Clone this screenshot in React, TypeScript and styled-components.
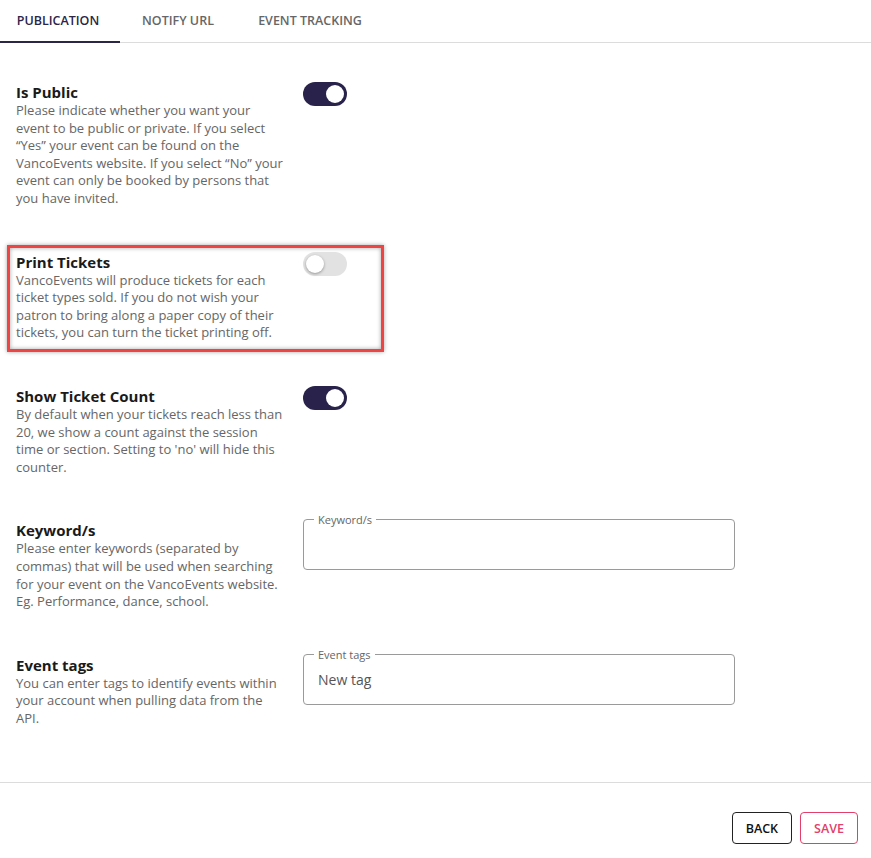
import styled, { createGlobalStyle } from "styled-components";
import { useState } from "react";

const GlobalStyle = createGlobalStyle`
  body {
    margin: 0;
    background: #ffffff;
    font-family: "Open Sans", "Noto Sans", sans-serif;
  }
`;

const Page = styled.div`
  width: 871px;
  background: #fff;
`;

const TabBar = styled.div`
  display: flex;
  height: 42px;
  border-bottom: 1px solid #dcdcdc;
`;

const Tab = styled.div<{ $active?: boolean; $width: number }>`
  position: relative;
  width: ${(p) => p.$width}px;
  display: flex;
  align-items: center;
  justify-content: center;
  padding-bottom: 2px;
  box-sizing: border-box;
  font-size: 12.5px;
  font-weight: 600;
  color: ${(p) => (p.$active ? "#2b2548" : "#666666")};
  cursor: pointer;
  &::after {
    content: "";
    display: ${(p) => (p.$active ? "block" : "none")};
    position: absolute;
    left: 0;
    width: 120px;
    bottom: -1px;
    height: 2px;
    background: #2b2548;
  }
`;

const Content = styled.div`
  display: flex;
  flex-direction: column;
  gap: 44px;
  padding: 39px 16px 55px;
`;

const Row = styled.div<{ $highlight?: boolean }>`
  position: relative;
  display: grid;
  grid-template-columns: 287px 432px;
  align-items: start;
  &::before {
    content: "";
    display: ${(p) => (p.$highlight ? "block" : "none")};
    position: absolute;
    left: -9px;
    top: -7px;
    width: 371px;
    bottom: -10px;
    border: 3px solid #ee4444;
    box-shadow: 0 0 4px rgba(0, 0, 0, 0.35), inset 0 0 4px rgba(0, 0, 0, 0.35);
    pointer-events: none;
  }
`;

const Info = styled.div`
  width: 268px;
`;

const Title = styled.div`
  font-size: 15px;
  line-height: 20px;
  font-weight: 700;
  color: #1a1a1a;
`;

const Desc = styled.div`
  font-size: 13px;
  line-height: 17.6px;
  color: #666666;
`;

const Track = styled.button<{ $on: boolean }>`
  position: relative;
  width: 44px;
  height: 24px;
  border: none;
  padding: 0;
  border-radius: 12px;
  background: ${(p) => (p.$on ? "#29224a" : "#e2e2e2")};
  cursor: pointer;
`;

const Knob = styled.span<{ $on: boolean }>`
  position: absolute;
  top: 3px;
  left: ${(p) => (p.$on ? "23px" : "3px")};
  width: 18px;
  height: 18px;
  border-radius: 50%;
  background: #ffffff;
  box-shadow: ${(p) => (p.$on ? "none" : "0 1px 3px rgba(0,0,0,0.35)")};
`;

const Field = styled.fieldset`
  margin: -6px 0 0;
  padding: 0 14px;
  height: 56px;
  box-sizing: border-box;
  border: 1px solid #9a9a9a;
  border-radius: 4px;
  display: flex;
  align-items: center;
`;

const Legend = styled.legend`
  padding: 0 4px;
  margin-left: -4px;
  font-size: 11px;
  line-height: 11px;
  color: #666666;
`;

const FieldInput = styled.input`
  border: none;
  outline: none;
  width: 100%;
  padding: 0;
  margin-top: -4px;
  font-family: "Open Sans", "Noto Sans", sans-serif;
  font-size: 14px;
  color: #555555;
  background: transparent;
  &::placeholder {
    color: #555555;
  }
`;

const Footer = styled.div`
  display: flex;
  justify-content: flex-end;
  gap: 8px;
  border-top: 1px solid #dcdcdc;
  padding: 29px 13px 15px;
`;

const ActionButton = styled.button<{ $tone: "dark" | "pink" }>`
  height: 32px;
  padding: 0 13px;
  background: #fff;
  border-radius: 4px;
  border: 1px solid ${(p) => (p.$tone === "dark" ? "#222222" : "#e2406b")};
  color: ${(p) => (p.$tone === "dark" ? "#111111" : "#e2406b")};
  font-family: "Open Sans", "Noto Sans", sans-serif;
  font-size: 12.5px;
  font-weight: 600;
  cursor: pointer;
`;

type Setting = {
  title: string;
  desc: string;
  kind: "toggle" | "field";
  on?: boolean;
  label?: string;
  placeholder?: string;
  highlight?: boolean;
};

const settings: Setting[] = [
  {
    title: "Is Public",
    desc: "Please indicate whether you want your event to be public or private. If you select “Yes” your event can be found on the VancoEvents website. If you select “No” your event can only be booked by persons that you have invited.",
    kind: "toggle",
    on: true,
  },
  {
    title: "Print Tickets",
    desc: "VancoEvents will produce tickets for each ticket types sold. If you do not wish your patron to bring along a paper copy of their tickets, you can turn the ticket printing off.",
    kind: "toggle",
    on: false,
    highlight: true,
  },
  {
    title: "Show Ticket Count",
    desc: "By default when your tickets reach less than 20, we show a count against the session time or section. Setting to 'no' will hide this counter.",
    kind: "toggle",
    on: true,
  },
  {
    title: "Keyword/s",
    desc: "Please enter keywords (separated by commas) that will be used when searching for your event on the VancoEvents website. Eg. Performance, dance, school.",
    kind: "field",
    label: "Keyword/s",
  },
  {
    title: "Event tags",
    desc: "You can enter tags to identify events within your account when pulling data from the API.",
    kind: "field",
    label: "Event tags",
    placeholder: "New tag",
  },
];

const App = () => {
  const [toggles, setToggles] = useState<boolean[]>(settings.map((s) => !!s.on));

  const flip = (i: number) => {
    const next = [...toggles];
    next[i] = !next[i];
    setToggles(next);
  };

  return (
    <>
      <GlobalStyle />
      <Page>
        <TabBar>
          <Tab $active $width={116}>PUBLICATION</Tab>
          <Tab $width={124}>NOTIFY URL</Tab>
          <Tab $width={140}>EVENT TRACKING</Tab>
        </TabBar>
        <Content>
          {settings.map((s, i) => (
            <Row key={s.title} $highlight={s.highlight}>
              <Info>
                <Title>{s.title}</Title>
                <Desc>{s.desc}</Desc>
              </Info>
              {s.kind === "toggle" ? (
                <Track $on={toggles[i]} onClick={() => flip(i)}>
                  <Knob $on={toggles[i]} />
                </Track>
              ) : (
                <Field>
                  <Legend>{s.label}</Legend>
                  <FieldInput placeholder={s.placeholder} />
                </Field>
              )}
            </Row>
          ))}
        </Content>
        <Footer>
          <ActionButton $tone="dark">BACK</ActionButton>
          <ActionButton $tone="pink">SAVE</ActionButton>
        </Footer>
      </Page>
    </>
  );
};

export default App;
